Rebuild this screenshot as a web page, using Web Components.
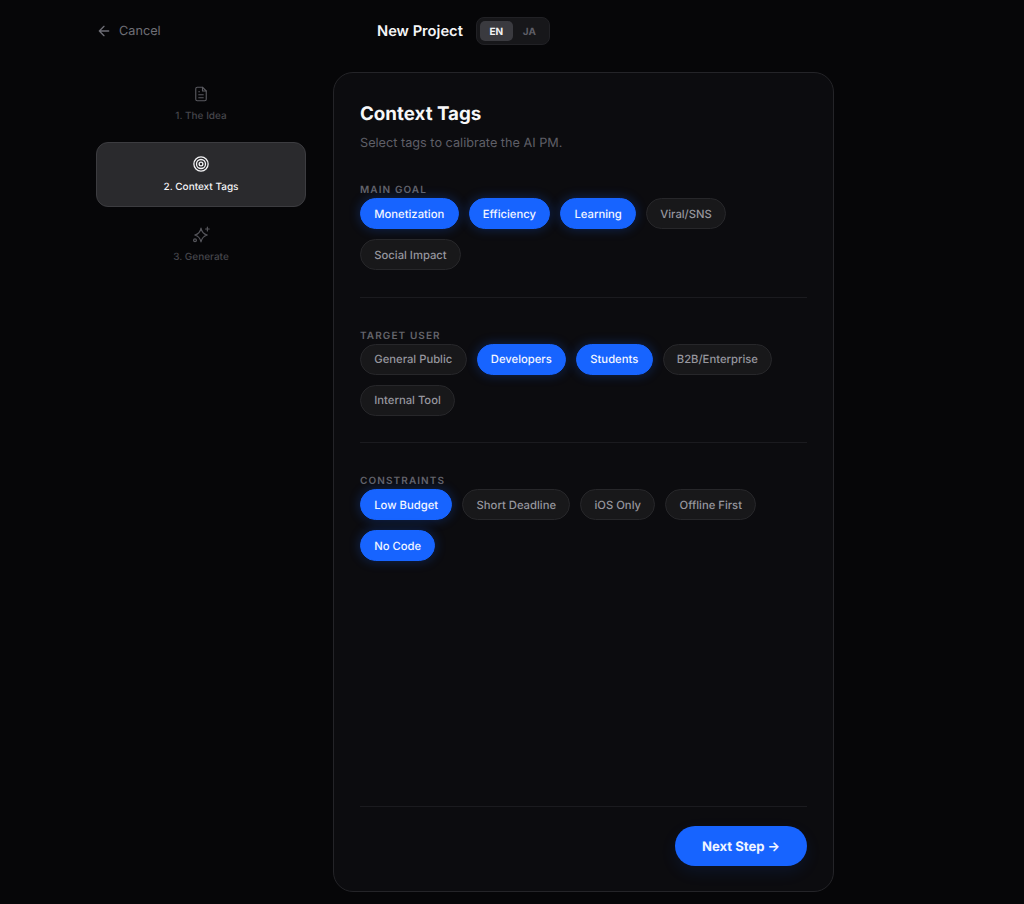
<!DOCTYPE html>
<html><head><meta charset="utf-8"><style>
html,body{margin:0;background:#060608;height:904px;overflow:hidden;font-family:Inter,"Liberation Sans",sans-serif;-webkit-font-smoothing:antialiased;text-rendering:geometricPrecision}
</style></head><body>
<template id="t-app"><style>
:host{display:flex;flex-direction:column;height:904px;box-sizing:border-box;padding:0 96px 12px}
.head{display:flex;align-items:center;height:62px;margin-bottom:10px;flex:none;position:relative}
.center{display:flex;align-items:center;gap:13px;margin-left:180px;}
h1{margin:.5px 0 0;font-size:14.7px;font-weight:600;color:#f5f5f7;line-height:20px}
.main{display:flex;gap:27px;flex:1;min-height:0}
</style><div class="head"><slot name="cancel"></slot><div class="center"><h1>New Project</h1><slot name="lang"></slot></div></div>
<div class="main"><slot name="side"></slot><slot name="card"></slot></div></template>

<template id="t-cancel"><style>
:host{display:flex;align-items:center;gap:7px;color:#6e6e76;font-size:12.7px;line-height:20px;width:101px;flex:none}
svg{width:16px;height:16px;display:block}
span{padding-top:2px}
</style><svg viewBox="0 0 24 24" fill="none" stroke="currentColor" stroke-width="2" stroke-linecap="round" stroke-linejoin="round"><path d="M12 19l-7-7 7-7M19 12H5"/></svg><span><slot></slot></span></template>

<template id="t-lang"><style>
:host{display:flex;padding:3px;gap:0;background:#17171a;border:1px solid #212125;border-radius:8px;box-sizing:border-box;height:28px;width:74px}
span{flex:1;display:flex;align-items:center;justify-content:center;font-size:10px;font-weight:700;color:#5e5e66;border-radius:5px;padding-top:1px}
span.on{background:#3a3a3f;color:#f2f2f4}
</style><span class="on">EN</span><span>JA</span></template>

<template id="t-side"><style>
:host{display:flex;flex-direction:column;width:210px;flex:none;gap:5.5px;margin-top:-.4px}
</style><slot></slot></template>

<template id="t-step"><style>
:host{display:flex;flex-direction:column;align-items:center;gap:6.5px;box-sizing:border-box;height:65px;padding-top:12px;border-radius:12px;border:1px solid transparent;color:#45454b;font-size:10px;line-height:14px;font-weight:500}
:host([active]){background:#2a2a2d;border-color:#3c3c40;color:#f4f4f6;}
::slotted(svg){width:18px;height:18px;display:block}
</style><slot name="icon"></slot><slot></slot></template>

<template id="t-card"><style>
:host{display:flex;flex-direction:column;width:501px;flex:none;box-sizing:border-box;background:#0c0c0f;border:1px solid #242428;border-radius:20px;padding:27px 26px 25px}
h2{margin:0;font-size:18.75px;line-height:28px;font-weight:700;color:#f7f7f9}
p{margin:2.5px 0 -.5px;font-size:12.7px;line-height:26px;color:#5f5f67}
.body{flex:1}
.foot{border-top:1px solid #1b1b1f;padding-top:19px;display:flex;justify-content:flex-end}
</style><h2><slot name="title"></slot></h2><p><slot name="sub"></slot></p><div class="body"><slot></slot></div><div class="foot"><slot name="foot"></slot></div></template>

<template id="t-group"><style>
:host{display:block;padding-top:25px;padding-bottom:26.6px;border-bottom:1px solid #1b1b1f;}
:host(:first-of-type){padding-top:21px}
:host(:last-of-type){border-bottom:0}
.lab{font-size:10px;line-height:14px;font-weight:600;letter-spacing:1.1px;color:#64646b;text-transform:uppercase;height:14px;margin-top:6px;margin-bottom:1px}
.chips{display:flex;flex-wrap:wrap;gap:10px}
</style><div class="lab"><slot name="label"></slot></div><div class="chips"><slot></slot></div></template>

<template id="t-chip"><style>
:host{display:inline-flex;align-items:center;height:31px;box-sizing:border-box;padding:0 13.25px;border-radius:16px;background:#18181a;border:1px solid #27272a;color:#96969e;font-size:11.25px;font-weight:500;white-space:nowrap}
:host([on]){background:#1764ff;border-color:#1764ff;color:#f3f6ff;box-shadow:0 0 12px rgba(23,100,255,.3)}
</style><slot></slot></template>

<template id="t-btn"><style>
:host{display:flex;align-items:center;justify-content:center;width:132px;height:40px;box-sizing:border-box;padding-top:1px;border-radius:20px;background:#1764ff;color:#f1f5ff;font-size:13.1px;font-weight:700;box-shadow:0 6px 16px rgba(23,100,255,.1)}
</style><slot></slot></template>

<x-app>
<x-cancel slot="cancel">Cancel</x-cancel>
<x-lang slot="lang"></x-lang>
<x-side slot="side">
<x-step><svg slot="icon" viewBox="0 0 24 24" fill="none" stroke="currentColor" stroke-width="1.5" stroke-linecap="round" stroke-linejoin="round" style="color:#5a5a60"><path d="M14 3H7a2 2 0 0 0-2 2v14a2 2 0 0 0 2 2h10a2 2 0 0 0 2-2V8z"/><path d="M14 3v5h5M9 13h6M9 17h6M9 9h1"/></svg>1. The Idea</x-step>
<x-step active><svg slot="icon" viewBox="0 0 24 24" fill="none" stroke="currentColor" stroke-width="1.7"><circle cx="12" cy="12" r="9.5"/><circle cx="12" cy="12" r="6"/><circle cx="12" cy="12" r="2.5"/></svg>2. Context Tags</x-step>
<x-step><svg slot="icon" viewBox="0 0 24 24" fill="none" stroke="currentColor" stroke-width="1.6" stroke-linecap="round" stroke-linejoin="round" style="color:#55555b"><path d="M12 2.700c1 5.500 3 7.800 8.300 9.300-5.300 1.500-7.300 3.800-8.300 9.300-1-5.500-3-7.800-8.300-9.300 5.300-1.500 7.300-3.800 8.300-9.300z"/><path d="M20.500 1.500v5M18 4h5"/><circle cx="4" cy="19" r="1.900"/></svg>3. Generate</x-step>
</x-side>
<x-card slot="card">
<span slot="title">Context Tags</span><span slot="sub">Select tags to calibrate the AI PM.</span>
<x-group><span slot="label">Main Goal</span><x-chip on>Monetization</x-chip><x-chip on>Efficiency</x-chip><x-chip on>Learning</x-chip><x-chip>Viral/SNS</x-chip><x-chip>Social Impact</x-chip></x-group>
<x-group><span slot="label">Target User</span><x-chip>General Public</x-chip><x-chip on>Developers</x-chip><x-chip on>Students</x-chip><x-chip>B2B/Enterprise</x-chip><x-chip>Internal Tool</x-chip></x-group>
<x-group><span slot="label">Constraints</span><x-chip on>Low Budget</x-chip><x-chip>Short Deadline</x-chip><x-chip>iOS Only</x-chip><x-chip>Offline First</x-chip><x-chip on>No Code</x-chip></x-group>
<x-btn slot="foot">Next Step →</x-btn>
</x-card>
</x-app>
<script>
const map={app:'x-app',cancel:'x-cancel',lang:'x-lang',side:'x-side',step:'x-step',card:'x-card',group:'x-group',chip:'x-chip',btn:'x-btn'};
for(const k in map){const t=document.getElementById('t-'+k);customElements.define(map[k],class extends HTMLElement{constructor(){super();this.attachShadow({mode:'open'}).appendChild(t.content.cloneNode(true));}});}
</script>
</body></html>
